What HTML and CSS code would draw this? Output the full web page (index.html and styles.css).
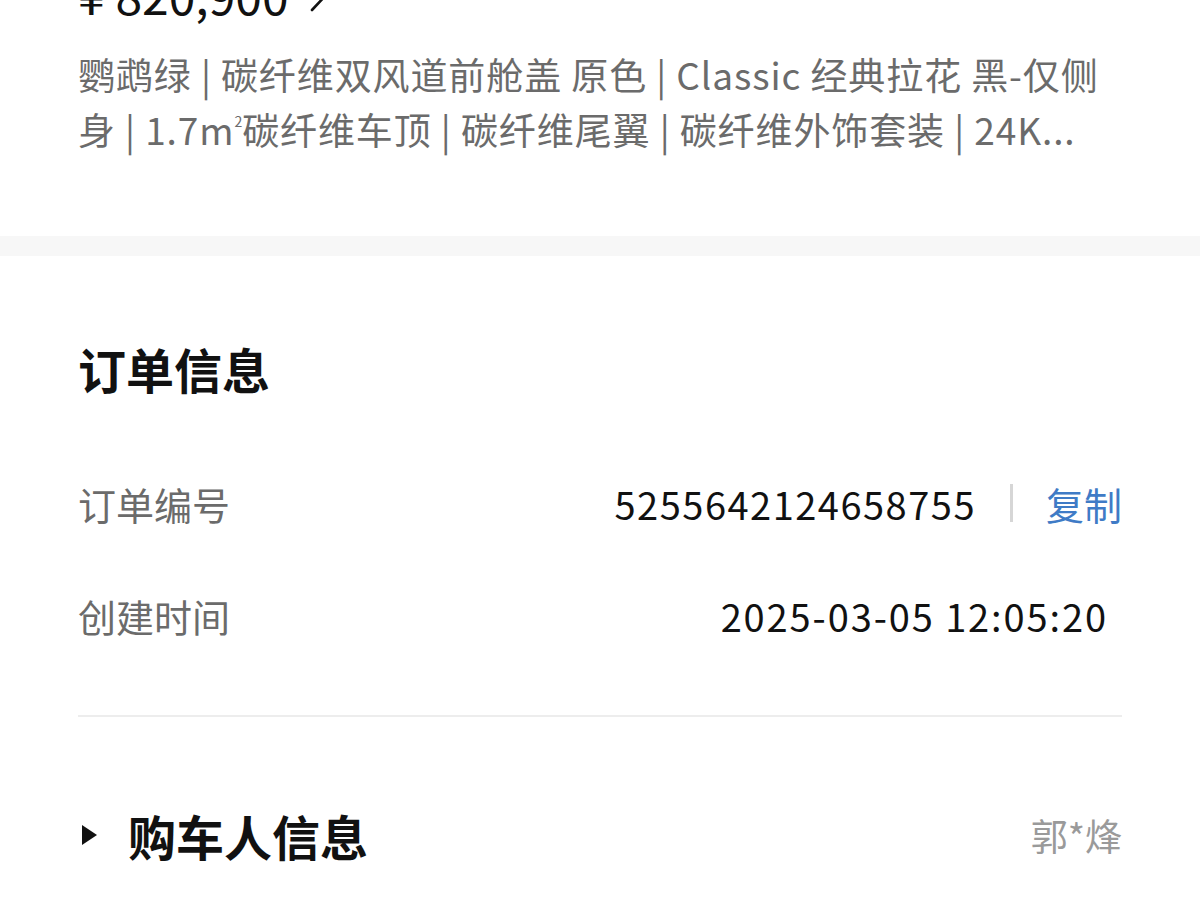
FILE: index.html
```html
<!DOCTYPE html>
<html lang="zh-CN">
<head>
<meta charset="utf-8">
<link rel="stylesheet" href="styles.css">
</head>
<body>
<div class="page">
  <section class="car">
    <div class="price">¥ 820,900 <span class="chev"><svg width="26" height="40" viewBox="0 0 26 40"><path d="M5 4 L20 20 L5 36" fill="none" stroke="#111" stroke-width="2.6" stroke-linecap="round" stroke-linejoin="round"/></svg></span></div>
    <p class="desc">鹦鹉绿 | 碳纤维双风道前舱盖 原色 | Classic 经典拉花 黑-仅侧身 | 1.7m<sup>2</sup>碳纤维车顶 | 碳纤维尾翼 | 碳纤维外饰套装 | 24K...</p>
  </section>
  <div class="band"></div>
  <section class="order">
    <h2 class="title">订单信息</h2>
    <div class="row">
      <span class="label">订单编号</span>
      <span class="value">5255642124658755<span class="sep"></span><span class="copy">复制</span></span>
    </div>
    <div class="row">
      <span class="label">创建时间</span>
      <span class="value time">2025-03-05 12:05:20</span>
    </div>
    <div class="divider"></div>
    <div class="buyer">
      <span class="buyer-title"><span class="tri"></span>购车人信息</span>
      <span class="buyer-name">郭*烽</span>
    </div>
  </section>
</div>
</body>
</html>
```

FILE: styles.css
```css
html, body {
  margin: 0;
  padding: 0;
  background: #ffffff;
}
body {
  font-family: "Noto Sans CJK SC", "Noto Sans", sans-serif;
  color: #111;
  overflow: hidden;
}
.page {
  width: 1200px;
}
.car {
  padding: 0 78px;
}
.price {
  margin-top: -30px;
  height: 48px;
  font-size: 48px;
  line-height: 48px;
  color: #111;
  display: flex;
  align-items: center;
  gap: 18px;
}
.chev {
  display: flex;
  align-items: center;
}
.desc {
  margin: 29px 0 0;
  font-size: 37px;
  line-height: 55px;
  letter-spacing: 0.9px;
  color: #6b6b6b;
}
.desc sup {
  font-size: 14px;
  vertical-align: 18px;
  line-height: 0;
  letter-spacing: 0;
}
.band {
  margin-top: 79px;
  height: 20px;
  background: #f7f7f7;
}
.order {
  padding: 82px 78px 0;
}
.title {
  margin: 0;
  font-size: 48px;
  line-height: 60px;
  font-weight: 700;
  color: #111;
}
.row {
  height: 112px;
  display: flex;
  justify-content: space-between;
  align-items: center;
}
.title + .row {
  margin-top: 49px;
}
.label {
  font-size: 38px;
  color: #6b6b6b;
}
.value {
  font-size: 38px;
  letter-spacing: 1.5px;
  color: #111;
  display: flex;
  align-items: center;
}
.time {
  margin-right: 14px;
  letter-spacing: 1.9px;
}
.sep {
  width: 3px;
  height: 38px;
  background: #d6d6d6;
  margin: 0 33px 0 34px;
}
.copy {
  color: #3f7bc6;
  letter-spacing: 0;
}
.divider {
  margin-top: 44px;
  height: 2px;
  background: #ededed;
}
.buyer {
  margin-top: 88px;
  height: 60px;
  display: flex;
  justify-content: space-between;
  align-items: center;
}
.buyer-title {
  display: flex;
  align-items: center;
  font-size: 48px;
  font-weight: 700;
}
.tri {
  width: 0;
  height: 0;
  border-top: 10px solid transparent;
  border-bottom: 10px solid transparent;
  border-left: 15px solid #111;
  margin: 0 31px 0 4px;
}
.buyer-name {
  font-size: 37px;
  color: #9a9a9a;
}
```
